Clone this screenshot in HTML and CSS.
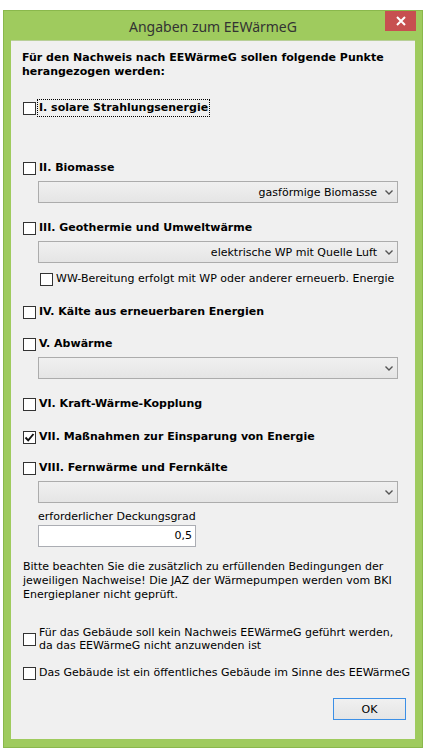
FILE: index.html
```html
<!DOCTYPE html>
<html lang="de">
<head>
    <meta charset="UTF-8">
    <meta name="viewport" content="width=device-width, initial-scale=1.0">
    <title>Angaben zum EEWärmeG</title>
    <link rel="stylesheet" href="styles.css">
</head>
<body>
    <div class="window">
        <div class="titlebar">
            <span class="title">Angaben zum EEWärmeG</span>
            <span class="close">
                <svg width="10" height="10" viewBox="0 0 10 10"><path d="M1 1 L9 9 M9 1 L1 9" stroke="#fff" stroke-width="2"/></svg>
            </span>
        </div>
        <div class="content">
            <p class="intro">Für den Nachweis nach EEWärmeG sollen folgende Punkte herangezogen werden:</p>

            <label class="check row-solar"><span class="box"></span><span class="label bold focus">I. solare Strahlungsenergie</span></label>

            <label class="check row-bio"><span class="box"></span><span class="label bold">II. Biomasse</span></label>
            <div class="select"><span class="value">gasförmige Biomasse</span><svg class="arrow" width="8" height="5" viewBox="0 0 8 5"><path d="M0.5 0.5 L4 4 L7.5 0.5" fill="none" stroke="#555" stroke-width="1.4"/></svg></div>

            <label class="check row-geo"><span class="box"></span><span class="label bold">III. Geothermie und Umweltwärme</span></label>
            <div class="select"><span class="value">elektrische WP mit Quelle Luft</span><svg class="arrow" width="8" height="5" viewBox="0 0 8 5"><path d="M0.5 0.5 L4 4 L7.5 0.5" fill="none" stroke="#555" stroke-width="1.4"/></svg></div>
            <label class="check sub"><span class="box"></span><span class="label">WW-Bereitung erfolgt mit WP oder anderer erneuerb. Energie</span></label>

            <label class="check row-kaelte"><span class="box"></span><span class="label bold">IV. Kälte aus erneuerbaren Energien</span></label>

            <label class="check row-abw"><span class="box"></span><span class="label bold">V. Abwärme</span></label>
            <div class="select"><span class="value"></span><svg class="arrow" width="8" height="5" viewBox="0 0 8 5"><path d="M0.5 0.5 L4 4 L7.5 0.5" fill="none" stroke="#555" stroke-width="1.4"/></svg></div>

            <label class="check row-kwk"><span class="box"></span><span class="label bold">VI. Kraft-Wärme-Kopplung</span></label>

            <label class="check row-mass"><span class="box checked"><svg width="11" height="11" viewBox="0 0 11 11"><path d="M1.5 5.5 L4.2 8.3 L9.5 2" fill="none" stroke="#111" stroke-width="1.9"/></svg></span><span class="label bold">VII. Maßnahmen zur Einsparung von Energie</span></label>

            <label class="check row-fern"><span class="box"></span><span class="label bold">VIII. Fernwärme und Fernkälte</span></label>
            <div class="select"><span class="value"></span><svg class="arrow" width="8" height="5" viewBox="0 0 8 5"><path d="M0.5 0.5 L4 4 L7.5 0.5" fill="none" stroke="#555" stroke-width="1.4"/></svg></div>

            <div class="field">
                <span class="field-label">erforderlicher Deckungsgrad</span>
                <div class="textbox">0,5</div>
            </div>

            <p class="note">Bitte beachten Sie die zusätzlich zu erfüllenden Bedingungen der<br>jeweiligen Nachweise! Die JAZ der Wärmepumpen werden vom BKI<br>Energieplaner nicht geprüft.</p>

            <label class="check row-kein"><span class="box"></span><span class="label">Für das Gebäude soll kein Nachweis EEWärmeG geführt werden,<br>da das EEWärmeG nicht anzuwenden ist</span></label>

            <label class="check row-oeff"><span class="box"></span><span class="label">Das Gebäude ist ein öffentliches Gebäude im Sinne des EEWärmeG</span></label>

            <div class="buttons">
                <button class="btn">OK</button>
            </div>
        </div>
    </div>
</body>
</html>
```

FILE: styles.css
```css
body {
    margin: 0;
    background-color: #ffffff;
    font-family: "DejaVu Sans", Verdana, sans-serif;
    font-size: 11px;
    color: #000000;
}
.window {
    margin: 10px 5px 4px 3px;
    width: 420px;
    height: 738px;
    box-sizing: border-box;
    background-color: #9fcb5e; /* green frame */
    border: 1px solid #8ab84c;
    display: flex;
    flex-direction: column;
}
.titlebar {
    height: 29px;
    position: relative;
    display: flex;
    justify-content: center;
    align-items: center;
}
.title {
    font-family: "Noto Sans", "Open Sans", sans-serif;
    font-size: 14px;
    color: #333333;
    margin-top: 1px;
}
.close {
    position: absolute;
    top: 0;
    right: 6px;
    width: 31px;
    height: 20px;
    background-color: #c75050;
    display: flex;
    justify-content: center;
    align-items: center;
}
.content {
    margin: 0 7px 8px 7px;
    flex: 1;
    background-color: #f0f0f0;
    border-top: 1px solid #b8cf98;
    padding: 10px 9px 0 12px;
    display: flex;
    flex-direction: column;
    align-items: flex-start;
}
.intro {
    margin: 0 0 0 -1px;
    font-weight: bold;
    line-height: 14px;
    width: 385px;
}
.check {
    display: flex;
    align-items: center;
    height: 16px;
    line-height: 14px;
    white-space: nowrap;
}
.box {
    width: 13px;
    height: 13px;
    box-sizing: border-box;
    border: 1px solid #333333;
    background-color: #ffffff;
    margin-right: 3px;
    flex-shrink: 0;
    display: flex;
    align-items: center;
    justify-content: center;
}
.bold {
    font-weight: bold;
}
.focus {
    outline: 1px dotted #000000;
    outline-offset: 1px;
}
.row-solar { margin-top: 21px; }
.row-bio { margin-top: 44px; }
.row-geo { margin-top: 17px; }
.row-kaelte { margin-top: 17px; }
.row-abw { margin-top: 16px; }
.row-kwk { margin-top: 17px; }
.row-mass { margin-top: 17px; }
.row-fern { margin-top: 15px; }
.sub {
    margin: 8px 0 0 17px;
}
.select {
    margin: 5px 0 0 15px;
    width: 360px;
    height: 22px;
    box-sizing: border-box;
    border: 1px solid #acacac;
    background: linear-gradient(#f0f0f0, #e5e5e5);
    display: flex;
    align-items: center;
    justify-content: flex-end;
    padding-right: 4px;
}
.select .value {
    margin-right: 8px;
}
.field {
    margin: 7px 0 0 15px;
    display: flex;
    flex-direction: column;
}
.field-label {
    line-height: 14px;
}
.textbox {
    margin-top: 1px;
    width: 158px;
    height: 22px;
    box-sizing: border-box;
    border: 1px solid #abadb3;
    background-color: #ffffff;
    text-align: right;
    line-height: 20px;
    padding-right: 3px;
}
.note {
    margin: 13px 0 0 0;
    line-height: 14px;
    white-space: nowrap;
}
.row-kein {
    margin-top: 24px;
    height: 26px;
    line-height: 13px;
}
.row-oeff { margin-top: 13px; }
.buttons {
    align-self: stretch;
    display: flex;
    justify-content: flex-end;
    margin-top: 17px;
}
.btn {
    width: 73px;
    height: 22px;
    border: 1px solid #3c8fe6;
    background: linear-gradient(#f0f0f0, #e5e5e5);
    font-family: "DejaVu Sans", Verdana, sans-serif;
    font-size: 11px;
    color: #000000;
    padding: 0;
}
```
